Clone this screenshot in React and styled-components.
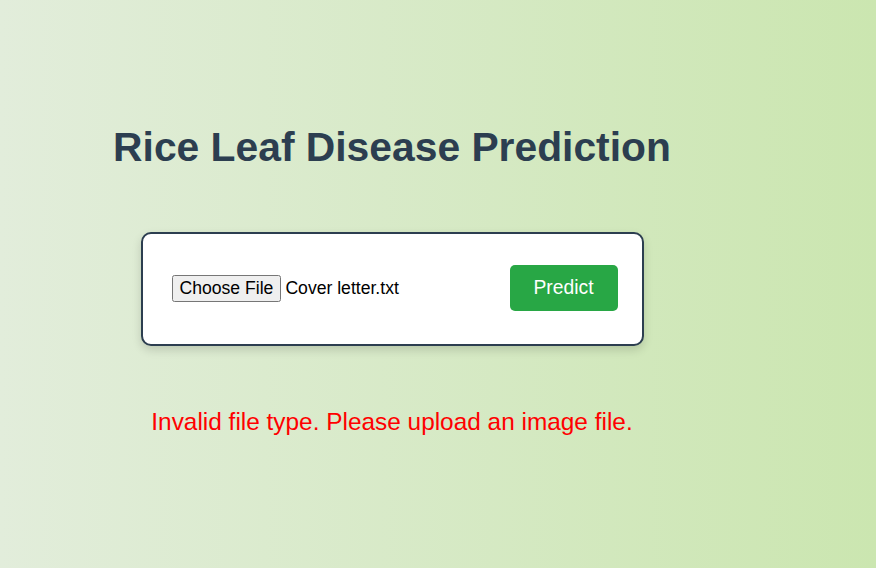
import { useEffect, useRef } from 'react';
import styled, { createGlobalStyle } from 'styled-components';

const GlobalStyle = createGlobalStyle`
  html, body {
    margin: 0;
    padding: 0;
  }
  body {
    min-height: 568px;
    font-family: "Liberation Sans", Arial, sans-serif;
    background: linear-gradient(to right, #e2eddb, #cbe6b0);
  }
`;

function App() {
  const fileRef = useRef(null);

  // show the picked file name, as in the screenshot
  useEffect(() => {
    const input = fileRef.current;
    if (!input || typeof DataTransfer === 'undefined') return;
    try {
      const dt = new DataTransfer();
      dt.items.add(new File(['cover letter'], 'Cover letter.txt', { type: 'text/plain' }));
      input.files = dt.files;
    } catch (e) {
      // ignore
    }
  }, []);

  return (
    <>
      <GlobalStyle />
      <Page>
        <Title>Rice Leaf Disease Prediction</Title>
        <Card onSubmit={(e) => e.preventDefault()}>
          <FileInput type="file" ref={fileRef} />
          <PredictButton type="submit">Predict</PredictButton>
        </Card>
        <ErrorText>Invalid file type. Please upload an image file.</ErrorText>
      </Page>
    </>
  );
}

export default App;

const Page = styled.div`
  width: 600px;
  margin: 0 92px;
  padding-top: 124px;
  display: flex;
  flex-direction: column;
  align-items: center;
`;

const Title = styled.h1`
  margin: 0;
  font-size: 40.8px;
  font-weight: 700;
  color: #2c3e50;
`;

const Card = styled.form`
  box-sizing: border-box;
  width: 503px;
  margin-top: 61px;
  padding: 31px 24px 33px 29px;
  display: flex;
  align-items: center;
  justify-content: space-between;
  background: #ffffff;
  border: 2px solid #2c3e50;
  border-radius: 10px;
  box-shadow: 0 4px 10px rgba(0, 0, 0, 0.15);
`;

const FileInput = styled.input`
  font-family: "Liberation Sans", Arial, sans-serif;
  font-size: 17.6px;
  color: #000;
`;

const PredictButton = styled.button`
  width: 108px;
  height: 46px;
  border: none;
  border-radius: 5px;
  background: #28a745;
  color: #ffffff;
  font-family: "Liberation Sans", Arial, sans-serif;
  font-size: 19.3px;
  cursor: pointer;
`;

const ErrorText = styled.p`
  margin: 62px 0 0;
  font-size: 24.4px;
  color: #ff0000;
`;
